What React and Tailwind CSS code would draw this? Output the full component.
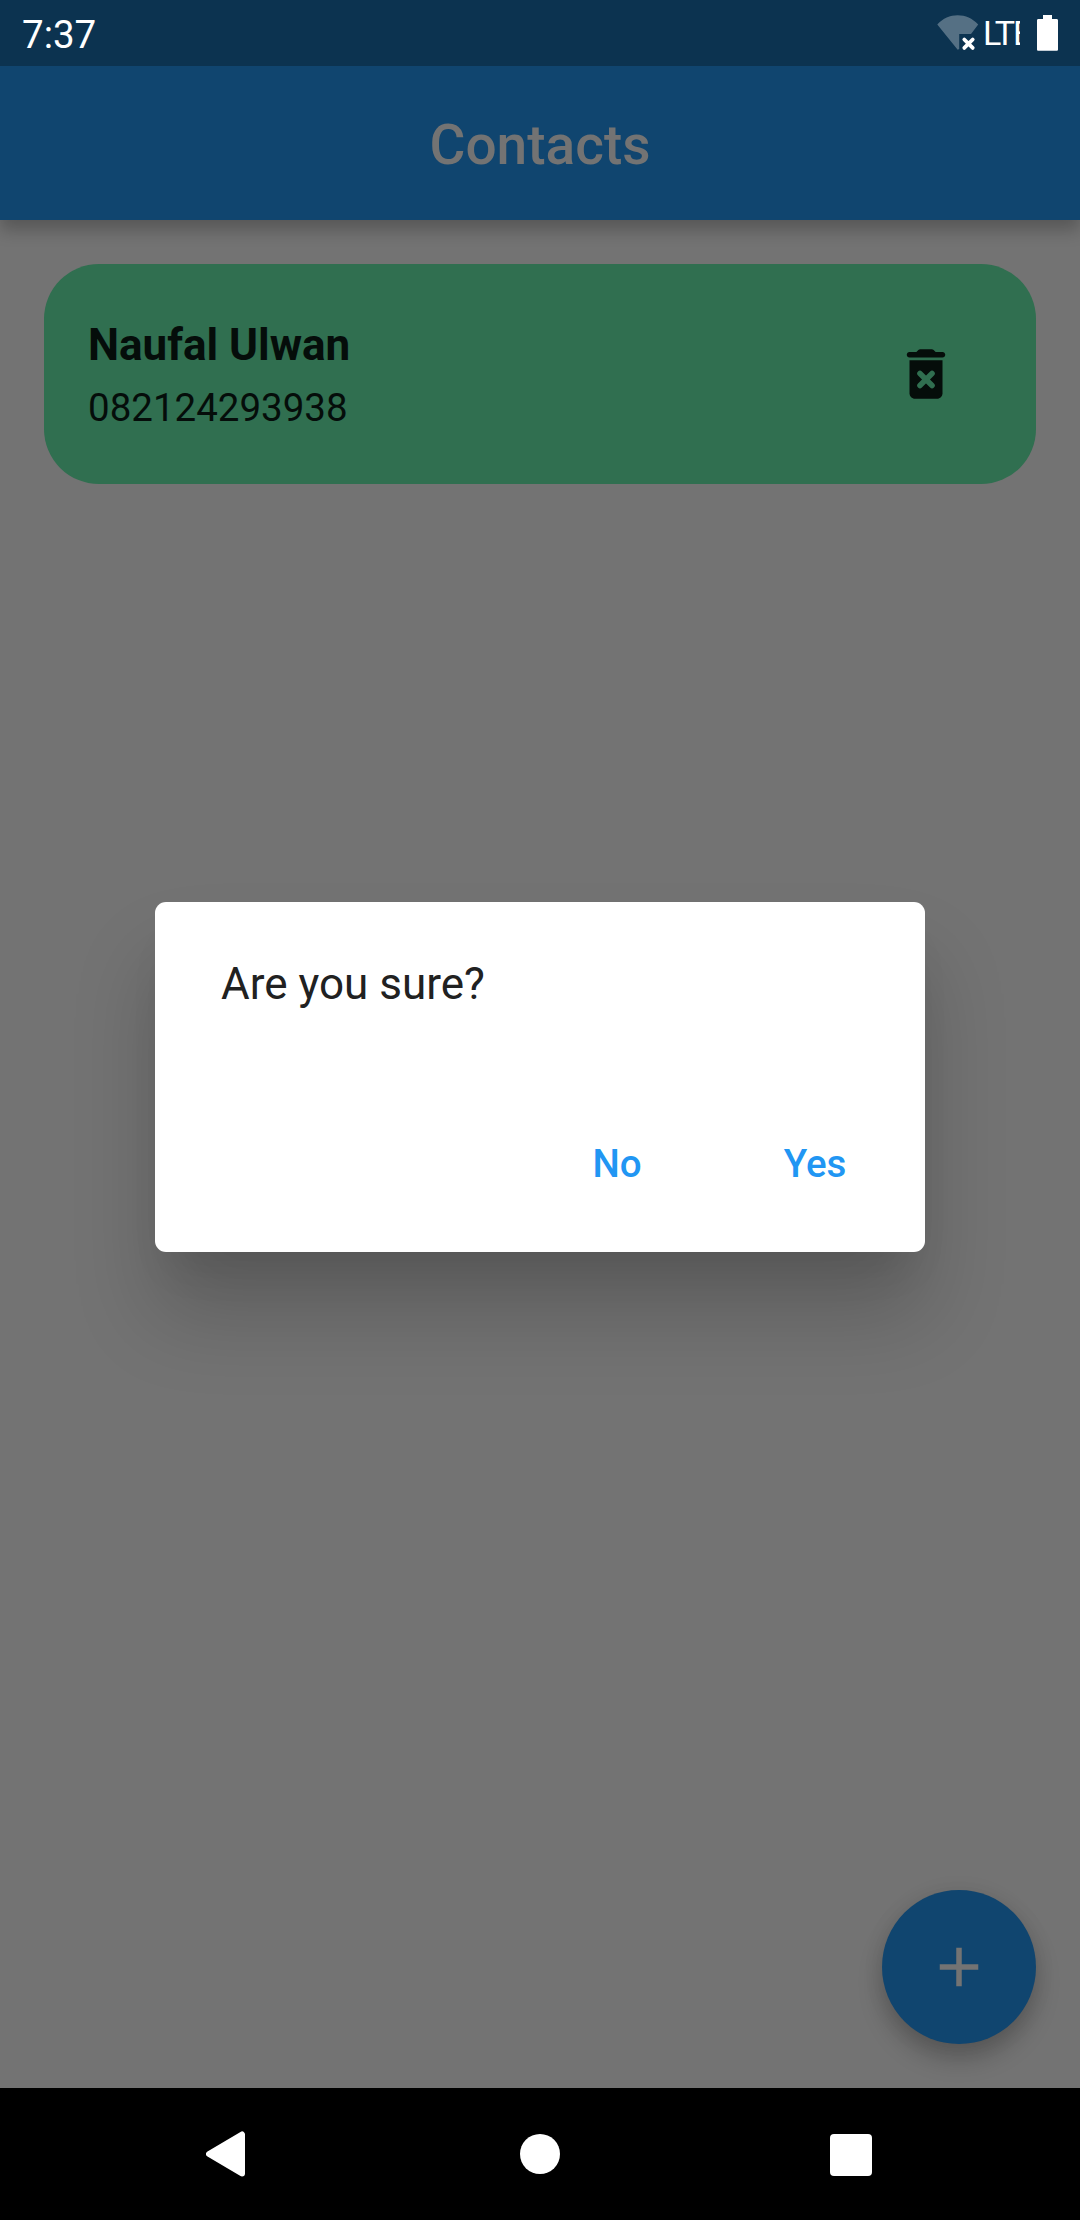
function WifiOff() {
  return (
    <svg className="h-[36px] w-[42px]" viewBox="0 0 42 36">
      <path d="M0.300 9.500C6 3.200 12.900 0.200 20.700 0.200S35.300 3.200 41.200 9.500L34 19H22.200V34L20.700 34.800Z" fill="#fff" opacity="0.3" />
      <path d="M27.300 24.500l8.400 8.400M35.700 24.500l-8.400 8.400" stroke="#fff" strokeWidth="3.800" strokeLinecap="round" />
    </svg>
  );
}

function Battery() {
  return (
    <svg className="h-[36px] w-[21px]" viewBox="0 0 21 36">
      <path d="M6 0h9v4h4.600c.8 0 1.400.6 1.400 1.400v29c0 .8-.6 1.400-1.400 1.400H1.400c-.8 0-1.400-.6-1.400-1.400V5.400C0 4.600.6 4 1.400 4H6z" fill="#fff" />
    </svg>
  );
}

function StatusBar() {
  return (
    <div className="relative z-10 flex h-[66px] items-start justify-between bg-[#0c3350] px-[22px] text-white">
      <span className="pt-[12px] text-[38.5px] leading-[46px]">7:37</span>
      <div className="flex items-start pt-[15px]">
        <WifiOff />
        <span className="ml-[4px] w-[37px] overflow-hidden whitespace-nowrap text-[34px] leading-[36px] tracking-[-2px]">LTE</span>
        <span className="ml-[17px]">
          <Battery />
        </span>
      </div>
    </div>
  );
}

function TrashIcon() {
  return (
    <svg className="size-[66px]" viewBox="0 0 24 24">
      <path d="M15.500 4l-.71-.71c-.18-.18-.44-.29-.7-.29H9.910c-.26 0-.52.11-.7.29L8.500 4H6c-.55 0-1 .45-1 1s.45 1 1 1h12c.55 0 1-.45 1-1s-.45-1-1-1z" fill="#050d0a" />
      <path d="M6 7h12v12c0 1.100-.9 2-2 2H8c-1.100 0-2-.9-2-2z" fill="#050d0a" />
      <path d="M9.800 11.800l4.400 4.400M14.200 11.800l-4.400 4.400" stroke="#306f50" strokeWidth="2" strokeLinecap="round" />
    </svg>
  );
}

function ContactCard({ name, phone }) {
  return (
    <div className="flex h-[220px] items-center justify-between rounded-[55px] bg-[#306f50] pl-[44px] pr-[77px] text-[#050d0a]">
      <div className="flex flex-col pt-[2px]">
        <span className="text-[44px] font-bold leading-[52px]">{name}</span>
        <span className="mt-[14px] text-[38.5px] leading-[46px]">{phone}</span>
      </div>
      <button>
        <TrashIcon />
      </button>
    </div>
  );
}

function Dialog() {
  return (
    <div className="absolute inset-x-0 top-[902px] flex justify-center">
      <div className="flex h-[350px] w-[770px] flex-col justify-between rounded-[11px] bg-white pl-[66px] pr-[22px] pt-[56px] shadow-[0_30px_41px_-19px_rgba(0,0,0,0.1),0_62px_84px_0_rgba(0,0,0,0.19)]">
        <span className="text-[44px] leading-[52px] text-[#212121]">Are you sure?</span>
        <div className="mb-[39px] flex justify-end gap-[22px] text-[38.5px] font-medium leading-[46px] text-[#2196f3]">
          <button className="h-[99px] w-[176px]">No</button>
          <button className="h-[99px] w-[176px]">Yes</button>
        </div>
      </div>
    </div>
  );
}

function NavBar() {
  return (
    <div className="flex h-[132px] items-center bg-black pl-[206px]">
      <svg className="h-[46px] w-[39px]" viewBox="0 0 39 46">
        <path d="M3 23L36 3.500V42.500Z" fill="#fff" stroke="#fff" strokeWidth="6" strokeLinejoin="round" />
      </svg>
      <div className="ml-[275px] size-[40px] rounded-full bg-white" />
      <div className="ml-[270px] mt-px size-[42px] rounded-[4px] bg-white" />
    </div>
  );
}

export default function App() {
  return (
    <div className="font-['Roboto',sans-serif] relative flex h-[2220px] w-[1080px] flex-col overflow-hidden bg-[#737373]">
      <StatusBar />
      <header className="flex h-[154px] items-center justify-center bg-[#10456f] shadow-[0_10px_16px_0_rgba(0,0,0,0.245)]">
        <h1 className="mt-[3px] text-[55px] font-medium leading-[64px] text-[#737373]">Contacts</h1>
      </header>
      <main className="flex flex-1 flex-col justify-between p-[44px]">
        <ContactCard name="Naufal Ulwan" phone="082124293938" />
        <button className="flex size-[154px] items-center justify-center self-end rounded-full bg-[#10456f] shadow-[0_15px_24px_0_rgba(0,0,0,0.22),0_2px_22px_0_rgba(0,0,0,0.07)]">
          <svg className="size-[66px]" viewBox="0 0 24 24">
            <path d="M19 13h-6v6h-2v-6H5v-2h6V5h2v6h6z" fill="#737373" />
          </svg>
        </button>
      </main>
      <NavBar />
      <Dialog />
    </div>
  );
}
